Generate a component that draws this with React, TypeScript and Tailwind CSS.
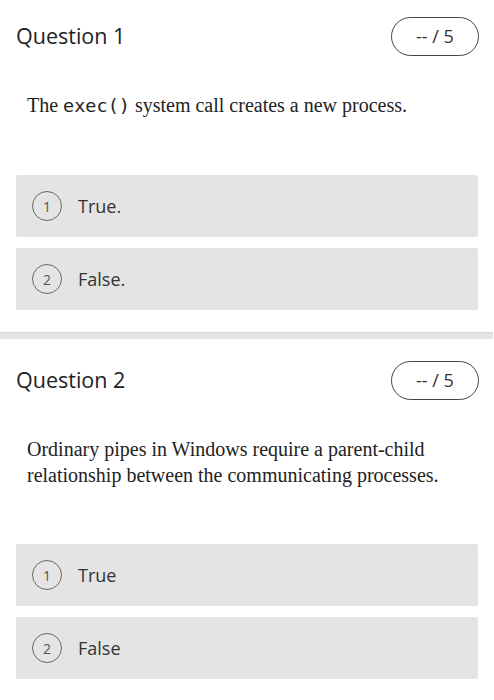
import React from "react";

const sans = { fontFamily: '"Open Sans", "Noto Sans", sans-serif' };

function Option({ n, label }: { n: number; label: string }) {
  return (
    <div className="flex h-[62px] items-center rounded-[2px] bg-[#e4e4e4] pl-4">
      <div className="flex h-[30px] w-[30px] items-center justify-center rounded-full border-[1.5px] border-[#666] text-[14px] text-[#555]">
        {n}
      </div>
      <span className="ml-[16px] text-[18px] text-[#333]">{label}</span>
    </div>
  );
}

function Question({
  title,
  children,
  options,
  top,
}: {
  title: string;
  children: React.ReactNode;
  options: string[];
  top: string;
}) {
  return (
    <section className={`px-4 ${top}`}>
      <div className="flex h-[39px] items-center justify-between">
        <h2 className="text-[21.5px] font-medium text-[#222]">{title}</h2>
        <div className="mr-[-1px] flex h-[39px] w-[88px] items-center justify-center rounded-full border border-[#444] text-[18px] text-[#333]">
          -- / 5
        </div>
      </div>
      <div
        className="mt-[36px] pl-[11px] text-[20px] leading-[26px] text-[#222]"
        style={{ fontFamily: '"Liberation Serif", "Times New Roman", serif' }}
      >
        {children}
      </div>
      <div className="mt-[56px] flex flex-col gap-[11px]">
        {options.map((o, i) => (
          <Option key={i} n={i + 1} label={o} />
        ))}
      </div>
    </section>
  );
}

export default function App() {
  return (
    <div className="h-[700px] w-[494px] overflow-hidden bg-white" style={sans}>
      <Question title="Question 1" options={["True.", "False."]} top="pt-[17px]">
        The{" "}
        <span
          className="text-[18.5px]"
          style={{ fontFamily: '"DejaVu Sans Mono", "Liberation Mono", monospace' }}
        >
          exec()
        </span>{" "}
        system call creates a new process.
      </Question>
      <div className="mt-[22px] h-[7px] w-[493px] border-t border-[#d6d6d6] bg-[#e4e4e4]" />
      <Question
        title="Question 2"
        options={["True", "False"]}
        top="pt-[22px]"
      >
        Ordinary pipes in Windows require a parent-child relationship between the communicating processes.
      </Question>
    </div>
  );
}
